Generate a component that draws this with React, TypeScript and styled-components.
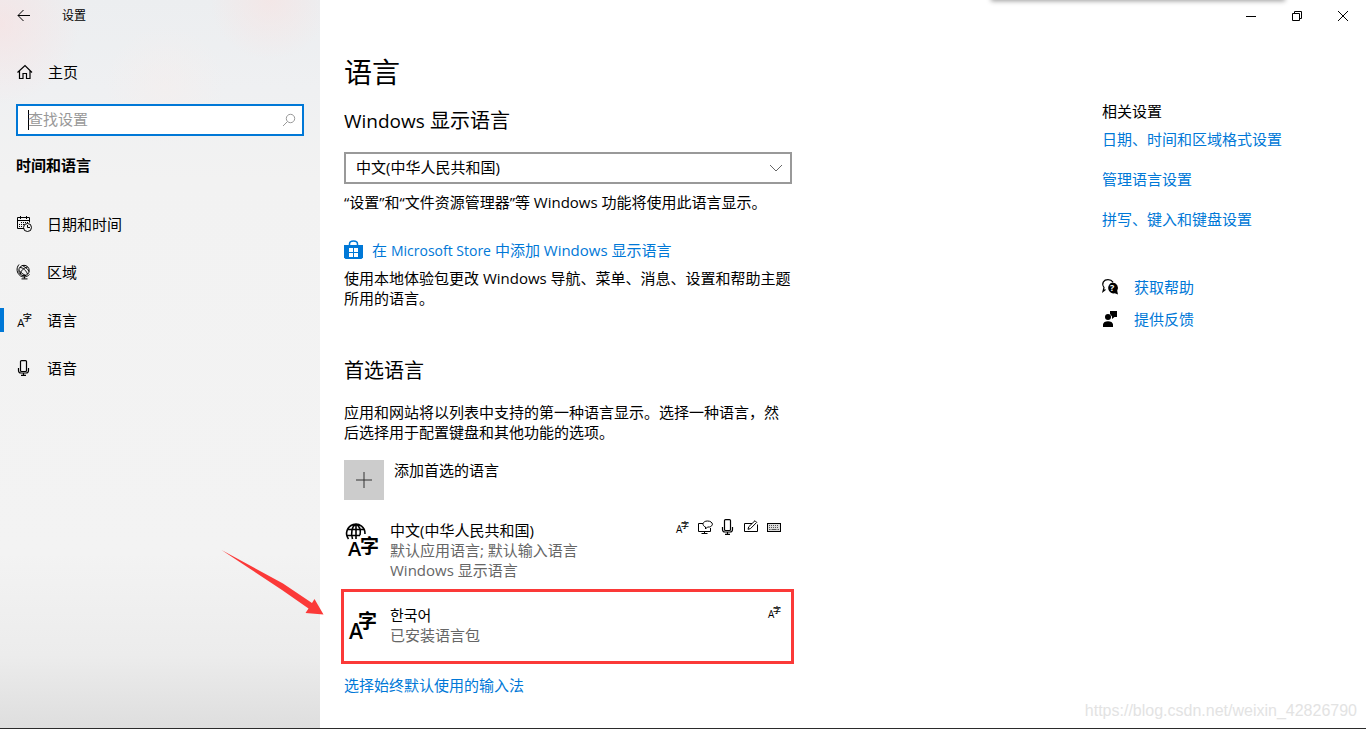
import React from "react";
import styled, { createGlobalStyle } from "styled-components";

const accent = "#0078d7";
const red = "#fb3938";
const uiFont = `"Open Sans", "Noto Sans CJK SC", "Noto Sans CJK KR", sans-serif`;

const GlobalStyle = createGlobalStyle`
  *, *::before, *::after { box-sizing: border-box; }
  body {
    margin: 0;
    background: #fff;
    color: #000;
    font: 15px/20px ${uiFont};
  }
  h1, h2, h3, p, ul { margin: 0; padding: 0; font-weight: 400; }
  ul { list-style: none; }
  button, input, select { font: inherit; color: inherit; }
  button { border: 0; padding: 0; background: none; }
  svg { display: block; flex: none; overflow: visible; }
`;

const Window = styled.div`
  position: relative;
  display: flex;
  min-height: 100vh;
  border-bottom: 1px solid #2b2b2b;
  overflow: hidden;
`;

const Sidebar = styled.aside`
  flex: none;
  width: 320px;
  background:
    radial-gradient(circle at 0 24px, rgba(250, 222, 222, 0.55), rgba(250, 222, 222, 0) 80px),
    radial-gradient(circle at 270px 0, rgba(250, 224, 222, 0.5), rgba(250, 224, 222, 0) 60px),
    radial-gradient(circle at 165px 85px, rgba(246, 238, 236, 0.5), rgba(246, 238, 236, 0) 60px),
    linear-gradient(#eceef0 0, #eff0f2 90px, #f2f2f2 180px, #f3f3f3 76%, #ececec 90%, #dedede 100%);
`;

const SidebarTitle = styled.div`
  display: flex;
  align-items: center;
  height: 32px;
  padding-left: 16px;
  gap: 30px;
  font-size: 12px;
`;

const IconButton = styled.button`
  display: flex;
  align-items: center;
  justify-content: center;
  width: 16px;
  height: 32px;
`;

const NavLink = styled.a<{ $active?: boolean }>`
  display: flex;
  align-items: center;
  gap: 15px;
  height: 48px;
  padding-left: 12px;
  border-left: 4px solid transparent;
  border-image: ${(p) =>
    p.$active
      ? `linear-gradient(transparent 25%, ${accent} 25%, ${accent} 75%, transparent 75%) 0 0 0 4`
      : "none"};
  color: inherit;
  text-decoration: none;
`;

const HomeArea = styled.div`
  padding-top: 16px;
  ${NavLink} { gap: 16px; }
`;

const SearchBox = styled.label`
  display: flex;
  align-items: center;
  height: 32px;
  margin: 8px 16px 0;
  padding: 0 6px 0 10px;
  border: 2px solid ${accent};
  background: #fff;
`;

const Caret = styled.span`
  width: 1px;
  height: 20px;
  margin-right: -1px;
  background: #000;
`;

const SearchInput = styled.input`
  flex: 1;
  min-width: 0;
  height: 22px;
  padding: 0 0 2px;
  border: 0;
  outline: 0;
  background: none;
  &::placeholder { color: #999; opacity: 1; }
`;

const SectionName = styled.h2`
  margin: 19px 16px 25px;
  font-size: 15px;
  line-height: 20px;
  font-weight: 700;
`;

const Main = styled.main`
  flex: 1;
  min-width: 0;
`;

const WindowControls = styled.div`
  display: flex;
  justify-content: flex-end;
  height: 32px;
`;

const WindowButton = styled.button`
  display: flex;
  align-items: center;
  justify-content: center;
  width: 46px;
`;

const Columns = styled.div`
  display: flex;
  justify-content: space-between;
  padding-left: 24px;
`;

const Content = styled.div`
  width: 448px;
  padding: 22px 0 32px;
`;

const PageTitle = styled.h1`
  font-size: 28px;
  line-height: 36px;
`;

const Heading = styled.h2<{ $top: number }>`
  margin-top: ${(p) => p.$top}px;
  font-size: 20px;
  line-height: 28px;
`;

const Latin = styled.span`
  font-size: 14px;
  line-height: 1;
  ${Heading} & { font-size: 19px; }
`;

const Paragraph = styled.p<{ $top: number }>`
  margin-top: ${(p) => p.$top}px;
`;

const SelectBox = styled.div`
  display: grid;
  align-items: center;
  margin-top: 17px;
  svg {
    grid-area: 1 / 1;
    justify-self: end;
    margin-right: 9px;
    pointer-events: none;
  }
`;

const Select = styled.select`
  grid-area: 1 / 1;
  width: 100%;
  height: 32px;
  padding: 0 32px 2px 10px;
  border: 2px solid #999;
  border-radius: 0;
  background: #fff;
  appearance: none;
`;

const Link = styled.a`
  display: flex;
  align-items: center;
  color: ${accent};
  text-decoration: none;
`;

const StoreLink = styled(Link)`
  gap: 9px;
  margin-top: 28px;
`;

const AddButton = styled.button`
  display: flex;
  gap: 10px;
  margin-top: 18px;
`;

const AddTile = styled.span`
  display: flex;
  align-items: center;
  justify-content: center;
  width: 40px;
  height: 40px;
  background: #ccc;
`;

const LanguageList = styled.ul`
  margin-top: 20px;
`;

const LanguageRow = styled.li<{ $marked?: boolean }>`
  display: flex;
  gap: 6px;
  padding-right: 11px;
  ${(p) =>
    p.$marked &&
    `
    margin: 9px -2px 0 -3px;
    padding: 13px 10px 16px 0;
    border: 3px solid ${red};
  `}
`;

const LanguageText = styled.div`
  flex: 1;
`;

const LanguageName = styled.h3`
  font-size: 15px;
  line-height: 20px;
`;

const Muted = styled.p`
  color: #666;
`;

const Features = styled.div`
  display: flex;
  align-items: center;
  gap: 9px;
  height: 14px;
`;

const InputLink = styled(Link)`
  margin-top: 11px;
`;

const Related = styled.aside`
  width: 264px;
  padding-top: 69px;
`;

const RelatedLinks = styled.div`
  display: flex;
  flex-direction: column;
  align-items: flex-start;
  gap: 20px;
  margin-top: 8px;
`;

const HelpLinks = styled.div`
  display: flex;
  flex-direction: column;
  align-items: flex-start;
  gap: 12px;
  margin-top: 48px;
  ${Link} { gap: 16px; }
  svg { color: #000; }
`;

const Watermark = styled.div`
  position: absolute;
  right: 9px;
  bottom: 7px;
  color: #e3e3e3;
  font: 16px/20px "Liberation Sans", sans-serif;
`;

const EdgeShadow = styled.div`
  position: absolute;
  top: -4px;
  right: 82px;
  width: 292px;
  height: 4px;
  box-shadow: 0 0 5px 1px rgba(0, 0, 0, 0.4);
`;

const Arrow = styled.svg`
  position: absolute;
  left: 220px;
  top: 548px;
`;

const line = { fill: "none", stroke: "currentColor", strokeWidth: 1 } as const;

const BackIcon = () => (
  <svg width="16" height="16" {...line}>
    <path d="M2 7.500h12M7.500 2L2 7.500 7.500 13" />
  </svg>
);

const HomeIcon = () => (
  <svg width="16" height="16" {...line} strokeWidth={1.2}>
    <path d="M1.500 8.500L9 1.500l7 7M3.500 7v7.500h3.500v-5h3.500v5H14V7" />
  </svg>
);

const SearchIcon = () => (
  <svg width="14" height="14" {...line} stroke="#999">
    <circle cx="8.500" cy="5.500" r="4.200" />
    <path d="M5.500 8.500L1 13" />
  </svg>
);

const CalendarIcon = () => (
  <svg width="16" height="16" {...line}>
    <path d="M8 12.500H1.500v-11h12v5M1.500 4.500h12M4.500 0v3M10.500 0v3" />
    <path d="M5 6.500h7M3 8.500h6M3 10.500h4" strokeDasharray="1 1" />
    <circle cx="11.500" cy="11.500" r="4" />
    <path d="M11.500 9v2.500H14" />
  </svg>
);

const GlobeStandIcon = () => (
  <svg width="16" height="16" {...line}>
    <circle cx="8" cy="6.500" r="5.200" />
    <path d="M4 3.500c3 0 6 3 7.500 6.500M4.500 10c0-3 3-6 7-7M6.500 1.500C9 3 12 5 13 7.500M3 6.500c2 2 4 4 7 5" />
    <path d="M3 0.500C0 4 .5 9 4.500 12c3 1.800 6.500 1 9-1.500M8.500 12.500v2M5.500 14.900h6" />
  </svg>
);

const LanguageIcon = ({ size = 14 }: { size?: number }) => (
  <svg width={size} height={size} viewBox="0 0 14 14" fill="currentColor" aria-hidden>
    <text x="1" y="13" fontSize="10" fontWeight="500" fontFamily="Open Sans">A</text>
    <text x="6" y="8" fontSize="8" fontWeight="500" fontFamily="Noto Sans CJK SC">字</text>
  </svg>
);

const MicIcon = ({ width = 16 }: { width?: number }) => (
  <svg width={width} height="16" viewBox={`${(16 - width) / 2} 0 ${width} 16`} {...line} strokeWidth={1.2}>
    <rect x="4.500" y="0.600" width="6" height="10.900" rx="1" />
    <path d="M2.500 8v2.500c0 1.500 1 2.500 2.500 2.500h5c1.500 0 2.500-1 2.500-2.500V8M7.500 13v2.400M5 15.400h5" />
  </svg>
);

const SpeechDisplayIcon = () => (
  <svg width="14" height="14" {...line}>
    <path d="M5 3.500H.5v8h12V8M6.500 11.500v2M3.500 13.500h6" />
    <path d="M7.500 9V7C3.500 5.500 4.500 1 9.500 1s7 4.500 2 6H9.500z" />
  </svg>
);

const PenIcon = () => (
  <svg width="14" height="14" {...line}>
    <path d="M8 3.500H.5v8h13V4.500" />
    <path d="M4 9.300l.7-2.500L11 .7l1.700 1.700-6.200 6.200z" />
  </svg>
);

const KeyboardIcon = () => (
  <svg width="14" height="14" {...line}>
    <rect x="0.500" y="3.500" width="13" height="8" fill="#ddd" />
    <path d="M2 5.500h10M2 7.500h10" strokeDasharray="1 1" stroke="#555" />
    <path d="M2 9.500h1.500M4.500 9.500h5M10.500 9.500H12" stroke="#555" />
  </svg>
);

const ChevronIcon = () => (
  <svg width="14" height="8" {...line} stroke="#666">
    <path d="M1 1l6 6 6-6" />
  </svg>
);

const StoreIcon = () => (
  <svg width="19" height="20" fill={accent}>
    <path d="M0 5h19v12.500l-1.500 1.500h-16L0 17.500z" />
    <path d="M5.500 6V4c0-4 8-4 8 0v2" fill="none" stroke={accent} strokeWidth="1.500" />
    <path d="M5 8h4v4H5zM10 8h4v4h-4zM5 13h4v4H5zM10 13h4v4h-4z" fill="#fff" />
  </svg>
);

const PlusIcon = () => (
  <svg width="16" height="16" {...line} stroke="#333">
    <path d="M0 8h16M8 0v16" />
  </svg>
);

const GlobeLanguageIcon = () => (
  <svg width="40" height="40" fill="currentColor" aria-hidden>
    <g fill="none" stroke="currentColor" strokeWidth="1.600">
      <path d="M4.500 19A9.200 9.200 0 1 1 21 14M3 9.500h18M3 15.500h13M12 4v15M8.500 19C6.500 13 8 6 12 4c3.500 2 5 6 4 11" />
    </g>
    <text x="4" y="36" fontSize="20" fontWeight="600" fontFamily="Open Sans">A</text>
    <text x="16" y="33" fontSize="19" fontWeight="700" fontFamily="Noto Sans CJK SC">字</text>
  </svg>
);

const LargeLanguageIcon = () => (
  <svg width="40" height="40" fill="currentColor" aria-hidden>
    <text x="5" y="34" fontSize="21" fontWeight="600" fontFamily="Open Sans">A</text>
    <text x="14" y="23" fontSize="19" fontWeight="700" fontFamily="Noto Sans CJK SC">字</text>
  </svg>
);

const HelpIcon = () => (
  <svg width="16" height="16" fill="currentColor">
    <path d="M3.500 10.500L1 12.500l1-4C-1 4 2 .7 6 .7c2.500 0 4 1 5 2.500" {...line} strokeWidth={1.2} />
    <path d="M10.500 3.500a5.500 5.500 0 0 1 4.700 8.300l.8 3.700-3.200-1.200A5.500 5.500 0 1 1 10.500 3.500z" />
    <text x="8" y="12" fontSize="9" fontWeight="700" fill="#fff" fontFamily="Open Sans">?</text>
  </svg>
);

const FeedbackIcon = () => (
  <svg width="16" height="16" fill="currentColor">
    <circle cx="6" cy="6" r="3" />
    <path d="M1 16v-2.500C1 9 11 9 11 13.500V16zM8 0h7v6h-2.500L10 8V5.500L8 3z" />
  </svg>
);

const navigation = [
  { label: "日期和时间", icon: <CalendarIcon /> },
  { label: "区域", icon: <GlobeStandIcon /> },
  { label: "语言", icon: <LanguageIcon size={16} />, active: true },
  { label: "语音", icon: <MicIcon /> },
];

export default function App() {
  return (
    <>
      <GlobalStyle />
      <Window>
        <Sidebar>
          <SidebarTitle>
            <IconButton aria-label="后退"><BackIcon /></IconButton>
            <span>设置</span>
          </SidebarTitle>
          <HomeArea>
            <NavLink href="#home"><HomeIcon />主页</NavLink>
          </HomeArea>
          <SearchBox>
            <Caret />
            <SearchInput type="text" placeholder="查找设置" aria-label="查找设置" />
            <SearchIcon />
          </SearchBox>
          <SectionName>时间和语言</SectionName>
          <nav>
            {navigation.map((item) => (
              <NavLink key={item.label} href="#section" $active={item.active}>
                {item.icon}
                {item.label}
              </NavLink>
            ))}
          </nav>
        </Sidebar>

        <Main>
          <WindowControls>
            <WindowButton aria-label="最小化">
              <svg width="10" height="10" {...line}><path d="M0 5.500h10" /></svg>
            </WindowButton>
            <WindowButton aria-label="还原">
              <svg width="10" height="10" {...line}><path d="M.5 2.500h7v7h-7zM2.500 2.500v-2h7v7h-2" /></svg>
            </WindowButton>
            <WindowButton aria-label="关闭">
              <svg width="10" height="10" {...line}><path d="M0 0l10 10M10 0L0 10" /></svg>
            </WindowButton>
          </WindowControls>
          <Columns>
            <Content>
              <PageTitle>语言</PageTitle>
              <Heading $top={17}><Latin>Windows</Latin> 显示语言</Heading>
              <SelectBox>
                <Select aria-label="Windows 显示语言">
                  <option>中文(中华人民共和国)</option>
                </Select>
                <ChevronIcon />
              </SelectBox>
              <Paragraph $top={8}>
                “设置”和“文件资源管理器”等 Windows 功能将使用此语言显示。
              </Paragraph>
              <StoreLink href="#store">
                <StoreIcon />
                <span>
                  在 <Latin>Microsoft Store</Latin> 中添加 Windows 显示语言
                </span>
              </StoreLink>
              <Paragraph $top={8}>
                使用本地体验包更改 Windows 导航、菜单、消息、设置和帮助主题所用的语言。
              </Paragraph>
              <Heading $top={49}>首选语言</Heading>
              <Paragraph $top={17}>
                应用和网站将以列表中支持的第一种语言显示。选择一种语言，然后选择用于配置键盘和其他功能的选项。
              </Paragraph>
              <AddButton>
                <AddTile><PlusIcon /></AddTile>
                添加首选的语言
              </AddButton>
              <LanguageList>
                <LanguageRow>
                  <GlobeLanguageIcon />
                  <LanguageText>
                    <LanguageName>中文(中华人民共和国)</LanguageName>
                    <Muted>默认应用语言; 默认输入语言</Muted>
                    <Muted>Windows 显示语言</Muted>
                  </LanguageText>
                  <Features>
                    <LanguageIcon />
                    <SpeechDisplayIcon />
                    <MicIcon width={14} />
                    <PenIcon />
                    <KeyboardIcon />
                  </Features>
                </LanguageRow>
                <LanguageRow $marked>
                  <LargeLanguageIcon />
                  <LanguageText>
                    <LanguageName>한국어</LanguageName>
                    <Muted>已安装语言包</Muted>
                  </LanguageText>
                  <Features><LanguageIcon /></Features>
                </LanguageRow>
              </LanguageList>
              <InputLink href="#input">选择始终默认使用的输入法</InputLink>
            </Content>

            <Related>
              <p>相关设置</p>
              <RelatedLinks>
                <Link href="#formats">日期、时间和区域格式设置</Link>
                <Link href="#admin">管理语言设置</Link>
                <Link href="#typing">拼写、键入和键盘设置</Link>
              </RelatedLinks>
              <HelpLinks>
                <Link href="#help"><HelpIcon />获取帮助</Link>
                <Link href="#feedback"><FeedbackIcon />提供反馈</Link>
              </HelpLinks>
            </Related>
          </Columns>
        </Main>

        <EdgeShadow />
        <Arrow width="106" height="70" fill={red} aria-hidden>
          <path d="M1.500 2L63 35.500 92 55l2.500-4 9 15.500-18-1.500 3-4.500L62 42z" />
        </Arrow>
        <Watermark>https://blog.csdn.net/weixin_42826790</Watermark>
      </Window>
    </>
  );
}
